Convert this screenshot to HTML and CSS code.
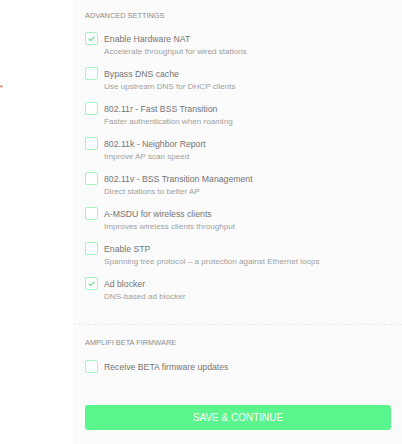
FILE: index.html
```html
<!DOCTYPE html>
<html>
<head>
  <meta charset="UTF-8">
  <meta name="viewport" content="width=device-width, initial-scale=1">
  <title>Advanced settings</title>
  <link rel="stylesheet" href="styles.css">
</head>
<body>

<main class="page">
  <span class="marker">*</span>
  <div class="gutter"></div>

  <div class="panel">

    <section class="section section--divided">
      <h6 class="section__title">Advanced settings</h6>
      <ul class="options">
        <li class="option">
          <span class="check check--on"><svg viewBox="0 0 13 13"><polyline points="3.2,6.6 5.6,9 10,4.2"/></svg></span>
          <div>
            <div class="option__label">Enable Hardware NAT</div>
            <div class="option__desc">Accelerate throughput for wired stations</div>
          </div>
        </li>
        <li class="option">
          <span class="check"></span>
          <div>
            <div class="option__label">Bypass DNS cache</div>
            <div class="option__desc">Use upstream DNS for DHCP clients</div>
          </div>
        </li>
        <li class="option">
          <span class="check"></span>
          <div>
            <div class="option__label">802.11r - Fast BSS Transition</div>
            <div class="option__desc">Faster authentication when roaming</div>
          </div>
        </li>
        <li class="option">
          <span class="check"></span>
          <div>
            <div class="option__label">802.11k - Neighbor Report</div>
            <div class="option__desc">Improve AP scan speed</div>
          </div>
        </li>
        <li class="option">
          <span class="check"></span>
          <div>
            <div class="option__label">802.11v - BSS Transition Management</div>
            <div class="option__desc">Direct stations to better AP</div>
          </div>
        </li>
        <li class="option">
          <span class="check"></span>
          <div>
            <div class="option__label">A-MSDU for wireless clients</div>
            <div class="option__desc">Improves wireless clients throughput</div>
          </div>
        </li>
        <li class="option">
          <span class="check"></span>
          <div>
            <div class="option__label">Enable STP</div>
            <div class="option__desc">Spanning tree protocol &ndash; a protection against Ethernet loops</div>
          </div>
        </li>
        <li class="option">
          <span class="check check--on"><svg viewBox="0 0 13 13"><polyline points="3.2,6.6 5.6,9 10,4.2"/></svg></span>
          <div>
            <div class="option__label">Ad blocker</div>
            <div class="option__desc">DNS-based ad blocker</div>
          </div>
        </li>
      </ul>
    </section>

    <section class="section section--last">
      <h6 class="section__title section__title--second">AmpliFi beta firmware</h6>
      <ul class="options">
        <li class="option">
          <span class="check"></span>
          <div class="option__label">Receive BETA firmware updates</div>
        </li>
      </ul>
      <a href="#" class="button">Save &amp; continue</a>
    </section>

  </div>
</main>

</body>
</html>
```

FILE: styles.css
```css
html,
body {
  -webkit-font-smoothing: antialiased;
}

body {
  margin: 0;
  font-family: "Liberation Sans", Arial, Helvetica, sans-serif;
  color: #777;
  background-color: #fff;
}

.page {
  position: relative;
  display: flex;
  min-height: 444px;
}

.marker {
  position: absolute;
  top: 84px;
  left: 0;
  font-size: 7px;
  line-height: 8px;
  color: #f22;
}

.gutter { width: 73px; flex: none; }

.panel {
  flex: 1;
  background-color: #fbfbfb;
}


/* Sections */

.section { padding: 10px 11px 21px 12px; }

.section--divided { border-bottom: 1px dashed #ececec; }

.section--last { padding-top: 12px; }

.section__title {
  margin: 0 0 11px;
  font-size: 7.4px;
  line-height: 11px;
  font-weight: normal;
  text-transform: uppercase;
  color: #8c8c8c;
}

.section__title--second { margin-bottom: 12px; }


/* Options */

.options {
  display: flex;
  flex-direction: column;
  gap: 9px;
  margin: 0;
  padding: 0;
  list-style: none;
}

.option {
  display: flex;
  gap: 6px;
}

.check {
  box-sizing: border-box;
  width: 13px;
  height: 13px;
  flex: none;
  border: 1.2px solid #a9f0c1;
  border-radius: 2px;
  background-color: #fff;
}

.check svg {
  display: block;
  width: 11px;
  height: 11px;
  fill: none;
  stroke: #4fd580;
  stroke-width: 1.2;
}

.option__label {
  font-size: 8.7px;
  line-height: 14px;
  color: #747474;
}

.option__desc {
  font-size: 8.1px;
  line-height: 12px;
  color: #a0a0a0;
}


/* Button */

.button {
  display: block;
  margin-top: 31px;
  height: 25px;
  border-radius: 3px;
  background-color: #5af58c;
  font-size: 10px;
  line-height: 25px;
  text-align: center;
  text-transform: uppercase;
  text-decoration: none;
  color: #fff;
}
```
